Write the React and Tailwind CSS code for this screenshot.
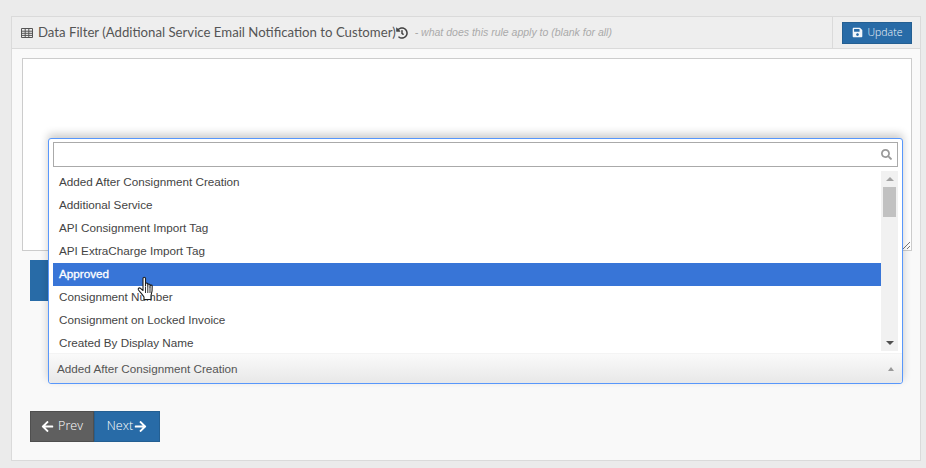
import React from "react";
import { FaHistory, FaSave, FaArrowLeft, FaArrowRight, FaSearch } from "react-icons/fa";

const items = [
  "Added After Consignment Creation",
  "Additional Service",
  "API Consignment Import Tag",
  "API ExtraCharge Import Tag",
  "Approved",
  "Consignment Number",
  "Consignment on Locked Invoice",
  "Created By Display Name",
];

function Hand() {
  return (
    <svg width="18" height="25" viewBox="0 0 18 25" className="absolute left-[137px] top-[276px]">
      <path
        d="M6 2.500c0-1.600 2.500-1.600 2.500 0V10V8c0-1.300 2.300-1.300 2.300 0v2.500-1.500c0-1.300 2.200-1.300 2.200 0v2-1c0-1.200 2.200-1.200 2.200 0 .2 3.500 0 6.500-1.200 9.500v4H7v-2.500C5.500 18.500 3 16 1.500 14c-.9-1.300.6-2.800 2-1.700L6 14.500V2.500z"
        fill="#fff"
        stroke="#1c1c1c"
        strokeWidth="1.100"
        strokeLinejoin="round"
      />
      <path d="M8.500 11v6M10.800 11v6M13 11v6" stroke="#1c1c1c" strokeWidth="0.900" />
    </svg>
  );
}

function TableIcon() {
  return (
    <svg width="12" height="10" viewBox="0 0 12 10" className="mr-[5px]">
      <path d="M.5.500h11v9H.5zM.5 3.200h11M.5 5.300h11M.5 7.400h11M4.200 .5v9M7.800 .5v9" fill="none" stroke="#555" strokeWidth="1" />
    </svg>
  );
}

export default function App() {
  return (
    <div className="relative h-[468px] w-[926px] overflow-hidden bg-[#ebebeb] pb-[7px] pl-[11px] pr-[5px] pt-4 font-['Lato',sans-serif]">
      <div className="h-[445px] w-[910px] border border-[#dadada] bg-[#f9f9f9]">
        <div className="flex h-[32px] items-stretch border-b border-[#dadada] bg-[#eeeeee]">
          <div className="flex flex-1 items-center pl-[9px] text-[13.2px] text-[#555555]">
            <TableIcon />
            <span className="whitespace-nowrap">Data Filter (Additional Service Email Notification to Customer)</span>
            <FaHistory size={12} className="text-[#444]" />
            <span className="ml-[7px] whitespace-nowrap pt-[1px] font-['Liberation_Sans',sans-serif] text-[10.5px] italic text-[#aaaaaa]">
              - what does this rule apply to (blank for all)
            </span>
          </div>
          <div className="flex w-[88px] items-center justify-end border-l border-[#dadada] pr-[8px]">
            <button className="flex h-[22px] w-[70px] items-center justify-center gap-[5px] border border-[#245f92] bg-[#286ba7] font-['Open_Sans',sans-serif] text-[10.5px] font-light text-[#f2f6fa]">
              <FaSave size={11} />
              Update
            </button>
          </div>
        </div>
        <div className="px-[10px] pt-[9px]">
          <div className="relative h-[193px] w-[890px] border border-[#cccccc] bg-white">
            <svg width="9" height="9" viewBox="0 0 9 9" className="absolute bottom-0 right-0">
              <path d="M1 8 8 1M5 8l3-3" stroke="#777" strokeWidth="1" />
            </svg>
          </div>
          <div className="ml-[8px] mt-[9px] h-[41px] w-[200px] bg-[#286ba7]" />
          <div className="ml-[8px] mt-[110px] flex h-[31px] w-[130px] font-['Open_Sans',sans-serif] text-[12.500px] font-light text-white">
            <button className="flex w-[64px] items-center justify-center gap-[4px] border border-[#4f4f4f] bg-[#5f5f5f]">
              <FaArrowLeft size={13} />
              <span>Prev</span>
            </button>
            <button className="flex w-[66px] items-center justify-center gap-[1px] border border-[#245f92] bg-[#286ba7]">
              <span>Next</span>
              <FaArrowRight size={13} />
            </button>
          </div>
        </div>
      </div>

      <div className="absolute left-[48px] top-[138px] h-[246px] w-[855px] rounded-[3px] border border-[#5897fb] bg-white font-['Liberation_Sans',sans-serif] text-[11.700px] text-[#444444] shadow-[0_-4px_8px_rgba(0,0,0,0.2)]">
        <div className="px-[4px] pt-[3px]">
          <div className="flex h-[25px] items-center justify-end border border-[#aaaaaa] pr-[5px]">
            <FaSearch size={11} className="text-[#999]" />
          </div>
        </div>
        <div className="flex h-[186px] pl-[4px] pr-[4px] pt-[4px]">
          <ul className="flex-1">
            {items.map((t) => (
              <li
                key={t}
                className={
                  t === "Approved"
                    ? "flex h-[23px] items-center bg-[#3875d7] pb-[2px] pl-[6px] text-white [-webkit-text-stroke:0.3px_#fff]"
                    : "flex h-[23px] items-center pb-[2px] pl-[6px]"
                }
              >
                {t}
              </li>
            ))}
          </ul>
          <div className="flex h-[180px] w-[17px] flex-col items-center bg-[#f1f1f1]">
            <div className="mt-[6px] h-0 w-0 border-x-[4px] border-b-[4px] border-x-transparent border-b-[#a3a3a3]" />
            <div className="mt-[6px] h-[30px] w-[13px] bg-[#c1c1c1]" />
            <div className="mb-[6px] mt-auto h-0 w-0 border-x-[4px] border-t-[4px] border-x-transparent border-t-[#505050]" />
          </div>
        </div>
        <div className="flex h-[30px] items-center justify-between rounded-b-[3px] border-t border-[#f4f4f4] bg-gradient-to-b from-[#fafafa] to-[#e8e8e8] pl-[8px] pr-[8px] text-[#555555]">
          <span>Added After Consignment Creation</span>
          <div className="h-0 w-0 border-x-[3px] border-b-[4px] border-x-transparent border-b-[#999]" />
        </div>
      </div>
      <Hand />
    </div>
  );
}
